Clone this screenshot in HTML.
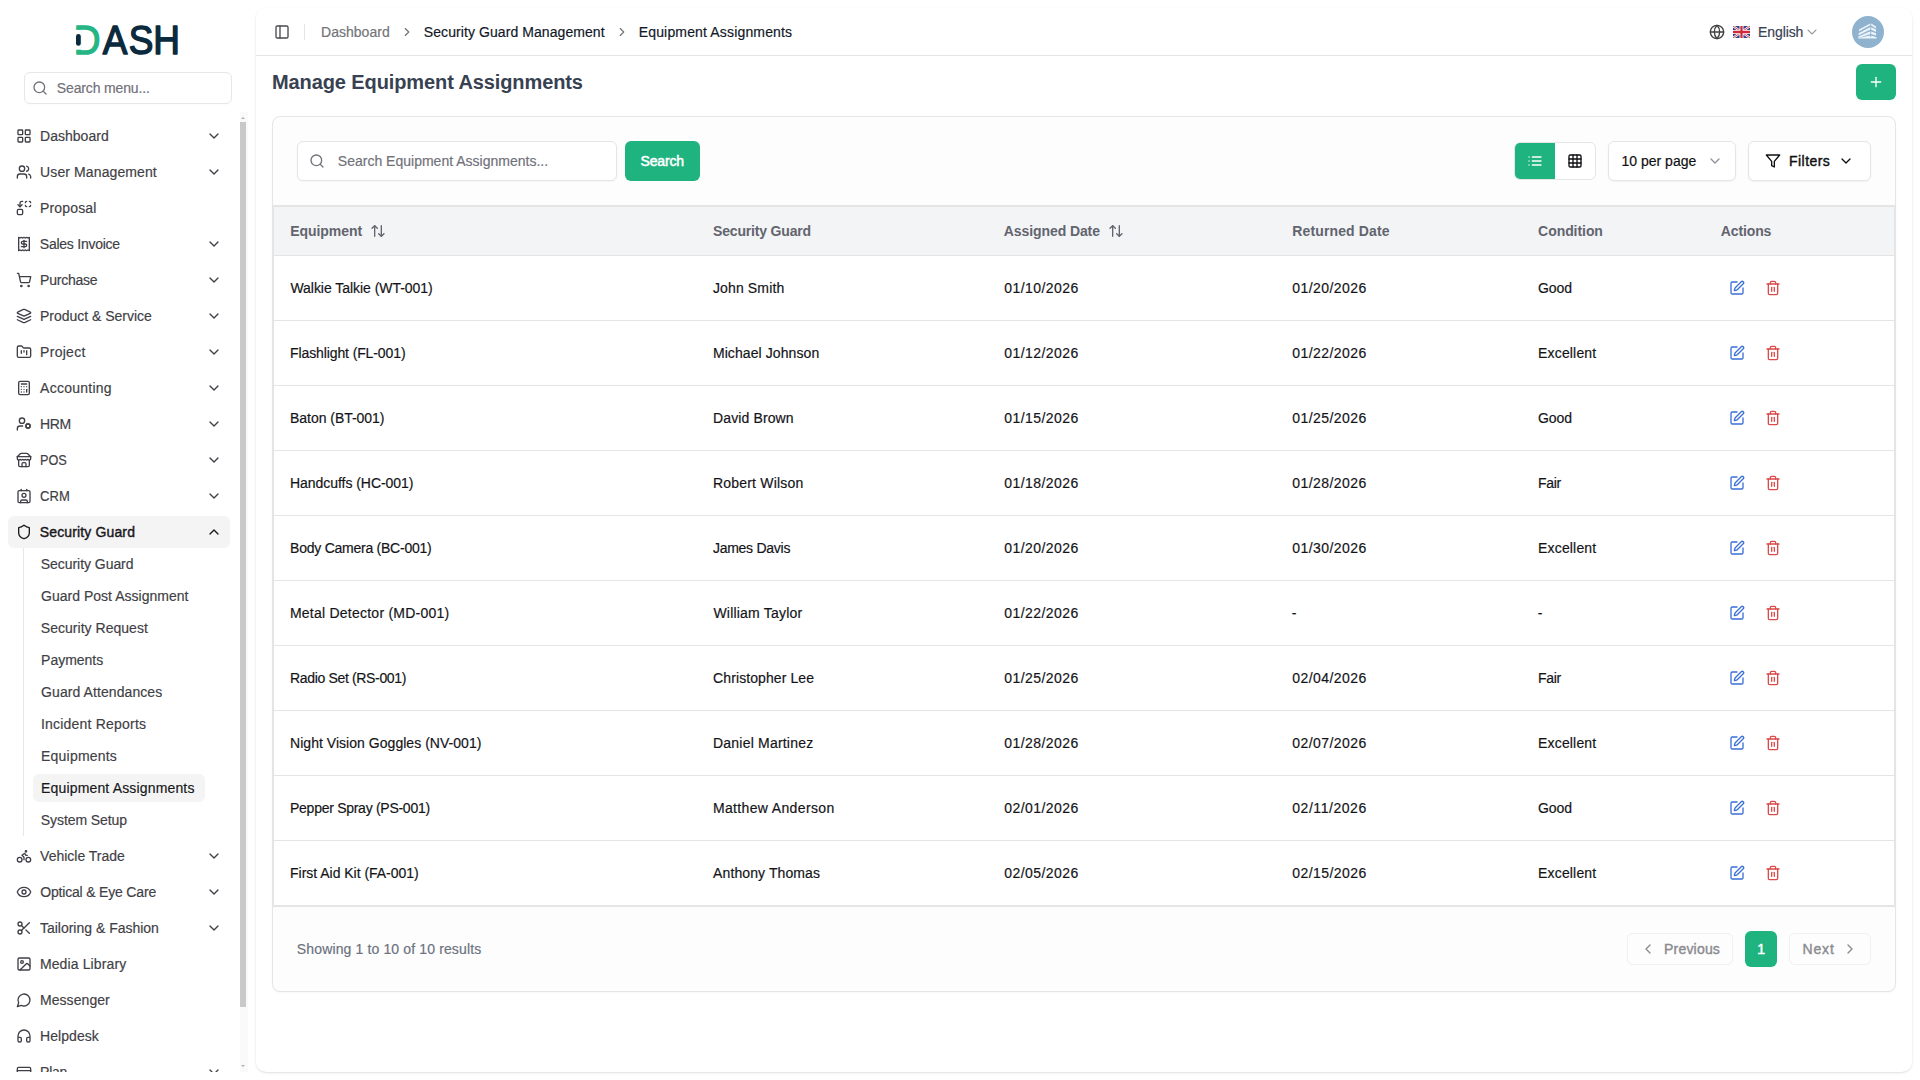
<!DOCTYPE html>
<html lang="en"><head><meta charset="utf-8"><title>Equipment Assignments</title>
<style>
*{box-sizing:border-box;margin:0;padding:0}
html,body{width:1920px;height:1080px;overflow:hidden;background:#fff}
body{font-family:"Liberation Sans",sans-serif;font-size:14px;color:#111827;position:relative}
ul{list-style:none}
.ic{display:block;flex:none}
.t{display:inline-block;white-space:nowrap;-webkit-text-stroke:.18px currentColor}
.w5{-webkit-text-stroke:.4px currentColor}
.sbtn .w5,.pn .w5{-webkit-text-stroke:.5px currentColor}
.w6{font-weight:700;-webkit-text-stroke:0}
.h{-webkit-text-stroke:0}
.sb{position:absolute;left:0;top:0;width:256px;height:1080px;background:#fff;overflow:hidden}
.logo{position:absolute;left:0;top:0;width:256px;height:72px}
.logo svg{display:block}
.sbsearch{position:absolute;left:24px;top:72px;width:208px;height:32px;border:1px solid #e7e7e9;border-radius:6px;display:flex;align-items:center;color:#71717a;background:#fff;box-shadow:0 1px 2px rgba(0,0,0,.02)}
.sbsearch .ic{margin-left:7px;color:#71717a}
.sbsearch .t{margin-left:9px;font-size:14px}
.sbscroll{position:absolute;left:8px;top:112px;width:230px;height:960px;overflow:hidden}
.menu{padding:8px 0}
.mi{height:32px;margin-bottom:4px;display:flex;align-items:center;padding:0 8px;border-radius:6px;color:#3f3f46;position:relative;width:222px}
.mi .mic{margin-right:8px;color:#3f3f46}
.mi .chev{position:absolute;right:8px;top:8px;color:#3f3f46}
.mi.act{background:#f4f4f5;color:#18181b}
.mi.act .mic,.mi.act .chev{color:#18181b}
.subw{margin:-4px 0 4px 0}
.sub{margin-left:15px;border-left:1px solid #e5e7eb;padding:2px 0 2px 9px}
.si{height:28px;margin-bottom:4px;display:flex;align-items:center;color:#3f3f46}
.si{padding:0 8px;border-radius:6px;width:172px}
.si .t{line-height:28px}
.si.cur{background:#f4f4f5;color:#18181b}
.sub .si:last-child{margin-bottom:0}
.sbar{position:absolute;left:240px;top:112px;width:8px;height:960px;background:#fafafa}
.sbar .thumb{position:absolute;left:0;top:10px;width:6px;height:885px;background:#c9c9c9}
.sbar .up,.sbar .dn{position:absolute;left:1px;width:0;height:0;border-left:2px solid transparent;border-right:2px solid transparent}
.sbar .up{top:5px;border-bottom:2px solid #adadad}
.sbar .dn{bottom:5px;border-top:2px solid #adadad}
.inset{position:absolute;left:256px;top:8px;width:1656px;height:1064px;background:#fff;border-radius:10px;box-shadow:0 1px 3px rgba(0,0,0,.1),0 1px 2px -1px rgba(0,0,0,.1)}
.hd{position:absolute;left:0;top:0;width:1656px;height:48px;border-bottom:1px solid #e5e5e5}
.tg{position:absolute;left:18px;top:16px;color:#4a4a50}
.sep{position:absolute;left:48px;top:16px;width:1px;height:16px;background:#e5e5e5}
.bc{position:absolute;left:65px;top:0;height:47px;display:flex;align-items:center;font-size:14px}
.bc .b1{color:#737378}
.bc .b2,.bc .b3{color:#111827}
.bc .bcs{color:#737378;margin:0 10px}
.hr{position:absolute;right:0;top:0;height:47px;width:300px}
.hr>*{position:absolute}
.hr .gl{left:97px;top:16px;color:#404040}
.hr .flag{left:121px;top:18px}
.hr .lang{left:146px;top:15px;line-height:18px;color:#374151;font-size:14px}
.hr .lch{left:192px;top:16px;color:#9a9da3}
.hr .av{left:240px;top:8px;width:32px;height:32px}
.ph{position:absolute;left:16px;top:56px;width:1624px;height:36px}
.ph h1{position:absolute;left:0;top:5px;font-size:20px;line-height:26px;font-weight:700;color:#374151}
.add{position:absolute;right:0;top:0;width:40px;height:36px;border-radius:6px;background:#1fb37f;color:#fff;display:flex;align-items:center;justify-content:center}
.cardx{position:absolute;left:16px;top:108px;width:1624px;height:876px;border:1px solid #e5e5e5;border-radius:8px;background:#fdfdfd;box-shadow:0 1px 2px rgba(0,0,0,.03)}
.tb{position:relative;height:89px;border-bottom:1px solid #e5e5e5}
.sin{position:absolute;left:24px;top:24px;width:320px;height:40px;border:1px solid #e5e5e5;border-radius:6px;background:#fff;display:flex;align-items:center;color:#71717a;box-shadow:0 1px 2px rgba(0,0,0,.04)}
.sin .ic{margin-left:11px}
.sin .t{margin-left:13px}
.sbtn{position:absolute;left:352px;top:24px;width:75px;height:40px;border-radius:6px;background:#1fb37f;color:#fff;display:flex;align-items:center;justify-content:center;font-size:14px;-webkit-text-stroke:.45px #fff}
.tbr{position:absolute;right:24px;top:24px;height:40px;display:flex;align-items:center}
.vt{display:flex;height:38px;width:82px;background:#fff;border-radius:6px;position:relative;border:1px solid #e5e5e5}
.v1{width:40px;height:36px;background:#1fb37f;color:#fff;display:flex;align-items:center;justify-content:center;border-radius:5px 0 0 5px}
.v2{width:40px;height:36px;display:flex;align-items:center;justify-content:center;color:#0f0f12}
.pp{margin-left:12px;width:128px;height:40px;border:1px solid #e5e5e5;border-radius:6px;background:#fff;display:flex;align-items:center;justify-content:space-between;padding:0 12px;color:#0f0f12;box-shadow:0 1px 2px rgba(0,0,0,.05)}
.pp .ppc{color:#8f9299}
.fl{margin-left:12px;width:123px;height:40px;border:1px solid #e5e5e5;border-radius:6px;background:#fff;display:flex;align-items:center;padding:0 16px;color:#0f0f12;box-shadow:0 1px 2px rgba(0,0,0,.05)}
.fl .fli{margin-right:8px}
.fl .flc{margin-left:8px}
.tbl{border-collapse:separate;border-spacing:0;table-layout:fixed;width:1622px;background:#fff;border:1px solid #e5e5e5}
.tbl th{height:49px;background:#f3f4f6;text-align:left;padding:0 16px;font-weight:400;color:#62646e;border-bottom:1px solid #e5e5e5;white-space:nowrap}
.tbl th .t{vertical-align:baseline}
.tbl th .srt{display:inline-block;vertical-align:-3px;margin-left:8px;color:#62646e}
.tbl td{height:65px;padding:0 16px;border-bottom:1px solid #e5e5e5;color:#141418;white-space:nowrap}
.tbl tr:last-child td{border-bottom:0;height:64px}
.acts{display:flex;align-items:center}
.acts .ed{color:#3b6fd8;margin-left:8px}
.acts .tr{color:#dc4a4a;margin-left:20px}
.ft{position:relative;height:85px;border-top:1px solid #e5e5e5}
.info{position:absolute;left:24px;top:33px;color:#6b7280;line-height:18px}
.pg{position:absolute;right:24px;top:24px;height:36px;display:flex;align-items:center}
.pb{height:32px;border:1px solid #f0f0f1;border-radius:6px;display:flex;align-items:center;justify-content:flex-end;color:#8b8b90;padding:0 12px;background:#fdfdfd}
.pb.next{width:82px}
.pb.prev{width:106px;justify-content:flex-start}
.pb.prev .ic{margin-right:8px}
.pb.next .ic{margin-left:8px}
.pn{width:32px;height:36px;border-radius:6px;background:#1fb37f;color:#fff;display:flex;align-items:center;justify-content:center;margin:0 12px;-webkit-text-stroke:.45px #fff}

</style></head>
<body>
<aside class="sb">
  <div class="logo"><svg class="lg" width="256" height="72" viewBox="0 0 256 72"><text transform="scale(0.9 1)" x="82.05 114.2 143.2 170.2" y="54" font-family="Liberation Sans, sans-serif" font-weight="400" font-size="41" stroke-width="1.5" stroke-linejoin="round"><tspan fill="#25b685" stroke="#25b685">D</tspan><tspan fill="#0b2a3d" stroke="#0b2a3d">ASH</tspan></text><rect x="74" y="29.9" width="7.6" height="19.8" fill="#fff"/><rect x="76" y="34" width="4.8" height="11.8" rx="2.4" fill="#0b2a3d"/></svg></div>
  <div class="sbsearch"><svg class="ic ssi" width="16" height="16" viewBox="0 0 24 24" fill="none" stroke="currentColor" stroke-width="2" stroke-linecap="round" stroke-linejoin="round"><circle cx="11" cy="11" r="8"/><path d="m21 21-4.3-4.3"/></svg><span class="t" style="width:92.49px;letter-spacing:-0.146px;text-indent:-0.19px;">Search menu...</span></div>
  <div class="sbscroll"><ul class="menu"><li class="mi"><svg class="ic mic" width="16" height="16" viewBox="0 0 24 24" fill="none" stroke="currentColor" stroke-width="2" stroke-linecap="round" stroke-linejoin="round"><rect width="7" height="7" x="3" y="3" rx="1"/><rect width="7" height="7" x="14" y="3" rx="1"/><rect width="7" height="7" x="14" y="14" rx="1"/><rect width="7" height="7" x="3" y="14" rx="1"/></svg><span class="t" style="width:69.03px;letter-spacing:0.021px;text-indent:0.06px;">Dashboard</span><svg class="ic chev" width="16" height="16" viewBox="0 0 24 24" fill="none" stroke="currentColor" stroke-width="2" stroke-linecap="round" stroke-linejoin="round"><path d="m6 9 6 6 6-6"/></svg></li><li class="mi"><svg class="ic mic" width="16" height="16" viewBox="0 0 24 24" fill="none" stroke="currentColor" stroke-width="2" stroke-linecap="round" stroke-linejoin="round"><path d="M16 21v-2a4 4 0 0 0-4-4H6a4 4 0 0 0-4 4v2"/><circle cx="9" cy="7" r="4"/><path d="M22 21v-2a4 4 0 0 0-3-3.87"/><path d="M16 3.13a4 4 0 0 1 0 7.75"/></svg><span class="t" style="width:116.9px;letter-spacing:0.106px;text-indent:0.12px;">User Management</span><svg class="ic chev" width="16" height="16" viewBox="0 0 24 24" fill="none" stroke="currentColor" stroke-width="2" stroke-linecap="round" stroke-linejoin="round"><path d="m6 9 6 6 6-6"/></svg></li><li class="mi"><svg class="ic mic" width="16" height="16" viewBox="0 0 24 24" fill="none" stroke="currentColor" stroke-width="2" stroke-linecap="round" stroke-linejoin="round"><path d="M14 4a2 2 0 0 1 2-2"/><path d="M16 10a2 2 0 0 1-2-2"/><path d="M20 2a2 2 0 0 1 2 2"/><path d="M22 8a2 2 0 0 1-2 2"/><path d="m3 7 3 3 3-3"/><path d="M6 10V5a3 3 0 0 1 3-3h1"/><rect x="2" y="14" width="8" height="8" rx="2"/></svg><span class="t" style="width:55.84px;letter-spacing:0.153px;text-indent:0.06px;">Proposal</span></li><li class="mi"><svg class="ic mic" width="16" height="16" viewBox="0 0 24 24" fill="none" stroke="currentColor" stroke-width="2" stroke-linecap="round" stroke-linejoin="round"><path d="M4 2v20l2-1 2 1 2-1 2 1 2-1 2 1 2-1 2 1V2l-2 1-2-1-2 1-2-1-2 1-2-1-2 1Z"/><path d="M16 8h-6a2 2 0 1 0 0 4h4a2 2 0 1 1 0 4H8"/><path d="M12 17.5v-11"/></svg><span class="t" style="width:80.32px;letter-spacing:-0.247px;text-indent:-0.19px;">Sales Invoice</span><svg class="ic chev" width="16" height="16" viewBox="0 0 24 24" fill="none" stroke="currentColor" stroke-width="2" stroke-linecap="round" stroke-linejoin="round"><path d="m6 9 6 6 6-6"/></svg></li><li class="mi"><svg class="ic mic" width="16" height="16" viewBox="0 0 24 24" fill="none" stroke="currentColor" stroke-width="2" stroke-linecap="round" stroke-linejoin="round"><circle cx="8" cy="21" r="1"/><circle cx="19" cy="21" r="1"/><path d="M2.05 2.05h2l2.66 12.42a2 2 0 0 0 2 1.58h9.78a2 2 0 0 0 1.95-1.57l1.65-7.43H5.12"/></svg><span class="t" style="width:57.85px;letter-spacing:-0.225px;text-indent:0.06px;">Purchase</span><svg class="ic chev" width="16" height="16" viewBox="0 0 24 24" fill="none" stroke="currentColor" stroke-width="2" stroke-linecap="round" stroke-linejoin="round"><path d="m6 9 6 6 6-6"/></svg></li><li class="mi"><svg class="ic mic" width="16" height="16" viewBox="0 0 24 24" fill="none" stroke="currentColor" stroke-width="2" stroke-linecap="round" stroke-linejoin="round"><path d="m12.83 2.18a2 2 0 0 0-1.66 0L2.6 6.08a1 1 0 0 0 0 1.83l8.58 3.91a2 2 0 0 0 1.66 0l8.58-3.9a1 1 0 0 0 0-1.83Z"/><path d="m22 17.65-9.17 4.16a2 2 0 0 1-1.66 0L2 17.65"/><path d="m22 12.65-9.17 4.16a2 2 0 0 1-1.66 0L2 12.65"/></svg><span class="t" style="width:112.05px;letter-spacing:-0.017px;text-indent:0.06px;">Product &amp; Service</span><svg class="ic chev" width="16" height="16" viewBox="0 0 24 24" fill="none" stroke="currentColor" stroke-width="2" stroke-linecap="round" stroke-linejoin="round"><path d="m6 9 6 6 6-6"/></svg></li><li class="mi"><svg class="ic mic" width="16" height="16" viewBox="0 0 24 24" fill="none" stroke="currentColor" stroke-width="2" stroke-linecap="round" stroke-linejoin="round"><path d="M4 20h16a2 2 0 0 0 2-2V8a2 2 0 0 0-2-2h-7.93a2 2 0 0 1-1.66-.9l-.82-1.2A2 2 0 0 0 7.93 3H4a2 2 0 0 0-2 2v13c0 1.1.9 2 2 2Z"/><path d="M8 10v4"/><path d="M12 10v2"/><path d="M16 10v6"/></svg><span class="t" style="width:45.54px;letter-spacing:0.295px;text-indent:0.06px;">Project</span><svg class="ic chev" width="16" height="16" viewBox="0 0 24 24" fill="none" stroke="currentColor" stroke-width="2" stroke-linecap="round" stroke-linejoin="round"><path d="m6 9 6 6 6-6"/></svg></li><li class="mi"><svg class="ic mic" width="16" height="16" viewBox="0 0 24 24" fill="none" stroke="currentColor" stroke-width="2" stroke-linecap="round" stroke-linejoin="round"><rect width="16" height="20" x="4" y="2" rx="2"/><line x1="8" x2="16" y1="6" y2="6"/><line x1="16" x2="16" y1="14" y2="18"/><path d="M16 10h.01"/><path d="M12 10h.01"/><path d="M8 10h.01"/><path d="M12 14h.01"/><path d="M8 14h.01"/><path d="M12 18h.01"/><path d="M8 18h.01"/></svg><span class="t" style="width:72.0px;letter-spacing:0.252px;text-indent:0.12px;">Accounting</span><svg class="ic chev" width="16" height="16" viewBox="0 0 24 24" fill="none" stroke="currentColor" stroke-width="2" stroke-linecap="round" stroke-linejoin="round"><path d="m6 9 6 6 6-6"/></svg></li><li class="mi"><svg class="ic mic" width="16" height="16" viewBox="0 0 24 24" fill="none" stroke="currentColor" stroke-width="2" stroke-linecap="round" stroke-linejoin="round"><circle cx="18" cy="15" r="3"/><circle cx="9" cy="7" r="4"/><path d="M10 15H6a4 4 0 0 0-4 4v2"/><path d="m21.7 16.4-.9-.3"/><path d="m15.2 13.9-.9-.3"/><path d="m16.6 18.7.3-.9"/><path d="m19.1 12.2.3-.9"/><path d="m19.6 18.7-.4-1"/><path d="m16.8 12.3-.4-1"/><path d="m14.3 16.6 1-.4"/><path d="m20.7 13.8 1-.4"/></svg><span class="t" style="width:31.03px;letter-spacing:-0.411px;text-indent:0.06px;">HRM</span><svg class="ic chev" width="16" height="16" viewBox="0 0 24 24" fill="none" stroke="currentColor" stroke-width="2" stroke-linecap="round" stroke-linejoin="round"><path d="m6 9 6 6 6-6"/></svg></li><li class="mi"><svg class="ic mic" width="16" height="16" viewBox="0 0 24 24" fill="none" stroke="currentColor" stroke-width="2" stroke-linecap="round" stroke-linejoin="round"><path d="m2 7 4.41-4.41A2 2 0 0 1 7.83 2h8.34a2 2 0 0 1 1.42.59L22 7"/><path d="M4 12v8a2 2 0 0 0 2 2h12a2 2 0 0 0 2-2v-8"/><path d="M15 22v-4a2 2 0 0 0-2-2h-2a2 2 0 0 0-2 2v4"/><path d="M2 7h20"/><path d="M22 7v3a2 2 0 0 1-2 2a2.7 2.7 0 0 1-1.59-.63.7.7 0 0 0-.82 0A2.7 2.7 0 0 1 16 12a2.7 2.7 0 0 1-1.59-.63.7.7 0 0 0-.82 0A2.7 2.7 0 0 1 12 12a2.7 2.7 0 0 1-1.59-.63.7.7 0 0 0-.82 0A2.7 2.7 0 0 1 8 12a2.7 2.7 0 0 1-1.59-.63.7.7 0 0 0-.82 0A2.7 2.7 0 0 1 4 12a2 2 0 0 1-2-2V7"/></svg><span class="t" style="width:26.89px;transform:scaleX(0.906);transform-origin:0 50%;text-indent:0.06px;">POS</span><svg class="ic chev" width="16" height="16" viewBox="0 0 24 24" fill="none" stroke="currentColor" stroke-width="2" stroke-linecap="round" stroke-linejoin="round"><path d="m6 9 6 6 6-6"/></svg></li><li class="mi"><svg class="ic mic" width="16" height="16" viewBox="0 0 24 24" fill="none" stroke="currentColor" stroke-width="2" stroke-linecap="round" stroke-linejoin="round"><path d="M16 2v2"/><path d="M7 22v-2a2 2 0 0 1 2-2h6a2 2 0 0 1 2 2v2"/><path d="M8 2v2"/><circle cx="12" cy="11" r="3"/><rect x="3" y="4" width="18" height="18" rx="2"/></svg><span class="t" style="width:29.84px;transform:scaleX(0.931);transform-origin:0 50%;text-indent:0.12px;">CRM</span><svg class="ic chev" width="16" height="16" viewBox="0 0 24 24" fill="none" stroke="currentColor" stroke-width="2" stroke-linecap="round" stroke-linejoin="round"><path d="m6 9 6 6 6-6"/></svg></li><li class="mi act"><svg class="ic mic" width="16" height="16" viewBox="0 0 24 24" fill="none" stroke="currentColor" stroke-width="2" stroke-linecap="round" stroke-linejoin="round"><path d="M20 13c0 5-3.5 7.5-7.66 8.95a1 1 0 0 1-.67-.01C7.5 20.5 4 18 4 13V6a1 1 0 0 1 1-1c2 0 4.5-1.2 6.24-2.72a1.17 1.17 0 0 1 1.52 0C14.51 3.81 17 5 19 5a1 1 0 0 1 1 1z"/></svg><span class="t w5" style="width:95.19px;letter-spacing:0.135px;text-indent:-0.19px;">Security Guard</span><svg class="ic chev" width="16" height="16" viewBox="0 0 24 24" fill="none" stroke="currentColor" stroke-width="2" stroke-linecap="round" stroke-linejoin="round"><path d="m18 15-6-6-6 6"/></svg></li><li class="subw"><ul class="sub"><li class="si"><span class="t" style="width:92.8px;letter-spacing:-0.052px;text-indent:-0.19px;">Security Guard</span></li><li class="si"><span class="t" style="width:148.3px;letter-spacing:0.01px;text-indent:0.12px;">Guard Post Assignment</span></li><li class="si"><span class="t" style="width:106.93px;letter-spacing:0.026px;text-indent:-0.19px;">Security Request</span></li><li class="si"><span class="t" style="width:62.3px;letter-spacing:-0.007px;text-indent:0.06px;">Payments</span></li><li class="si"><span class="t" style="width:122.06px;letter-spacing:0.079px;text-indent:0.12px;">Guard Attendances</span></li><li class="si"><span class="t" style="width:105.04px;letter-spacing:0.208px;text-indent:-0.06px;">Incident Reports</span></li><li class="si"><span class="t" style="width:75.9px;letter-spacing:0.208px;text-indent:0.06px;">Equipments</span></li><li class="si cur"><span class="t" style="width:154.22px;letter-spacing:0.158px;text-indent:0.06px;">Equipment Assignments</span></li><li class="si"><span class="t" style="width:86.24px;letter-spacing:-0.081px;text-indent:-0.19px;">System Setup</span></li></ul></li><li class="mi"><svg class="ic mic" width="16" height="16" viewBox="0 0 24 24" fill="none" stroke="currentColor" stroke-width="2" stroke-linecap="round" stroke-linejoin="round"><circle cx="18.5" cy="17.5" r="3.5"/><circle cx="5.5" cy="17.5" r="3.5"/><circle cx="15" cy="5" r="1"/><path d="M12 17.5V14l-3-3 4-3 2 3h2"/></svg><span class="t" style="width:85.35px;letter-spacing:-0.006px;text-indent:0.12px;">Vehicle Trade</span><svg class="ic chev" width="16" height="16" viewBox="0 0 24 24" fill="none" stroke="currentColor" stroke-width="2" stroke-linecap="round" stroke-linejoin="round"><path d="m6 9 6 6 6-6"/></svg></li><li class="mi"><svg class="ic mic" width="16" height="16" viewBox="0 0 24 24" fill="none" stroke="currentColor" stroke-width="2" stroke-linecap="round" stroke-linejoin="round"><path d="M2.062 12.348a1 1 0 0 1 0-.696 10.75 10.75 0 0 1 19.876 0 1 1 0 0 1 0 .696 10.75 10.75 0 0 1-19.876 0"/><circle cx="12" cy="12" r="3"/></svg><span class="t" style="width:116.39px;letter-spacing:-0.18px;text-indent:0.19px;">Optical &amp; Eye Care</span><svg class="ic chev" width="16" height="16" viewBox="0 0 24 24" fill="none" stroke="currentColor" stroke-width="2" stroke-linecap="round" stroke-linejoin="round"><path d="m6 9 6 6 6-6"/></svg></li><li class="mi"><svg class="ic mic" width="16" height="16" viewBox="0 0 24 24" fill="none" stroke="currentColor" stroke-width="2" stroke-linecap="round" stroke-linejoin="round"><circle cx="6" cy="6" r="3"/><path d="M8.12 8.12 12 12"/><path d="M20 4 8.12 15.88"/><circle cx="6" cy="18" r="3"/><path d="M14.8 14.8 20 20"/></svg><span class="t" style="width:119.11px;letter-spacing:-0.006px;text-indent:-0.06px;">Tailoring &amp; Fashion</span><svg class="ic chev" width="16" height="16" viewBox="0 0 24 24" fill="none" stroke="currentColor" stroke-width="2" stroke-linecap="round" stroke-linejoin="round"><path d="m6 9 6 6 6-6"/></svg></li><li class="mi"><svg class="ic mic" width="16" height="16" viewBox="0 0 24 24" fill="none" stroke="currentColor" stroke-width="2" stroke-linecap="round" stroke-linejoin="round"><rect width="18" height="18" x="3" y="3" rx="2" ry="2"/><circle cx="9" cy="9" r="2"/><path d="m21 15-3.086-3.086a2 2 0 0 0-2.828 0L6 21"/></svg><span class="t" style="width:86.48px;letter-spacing:0.128px;text-indent:-0.12px;">Media Library</span></li><li class="mi"><svg class="ic mic" width="16" height="16" viewBox="0 0 24 24" fill="none" stroke="currentColor" stroke-width="2" stroke-linecap="round" stroke-linejoin="round"><path d="M7.9 20A9 9 0 1 0 4 16.1L2 22Z"/></svg><span class="t" style="width:69.68px;letter-spacing:0.08px;text-indent:-0.12px;">Messenger</span></li><li class="mi"><svg class="ic mic" width="16" height="16" viewBox="0 0 24 24" fill="none" stroke="currentColor" stroke-width="2" stroke-linecap="round" stroke-linejoin="round"><path d="M3 14h3a2 2 0 0 1 2 2v3a2 2 0 0 1-2 2H5a2 2 0 0 1-2-2v-7a9 9 0 0 1 18 0v7a2 2 0 0 1-2 2h-1a2 2 0 0 1-2-2v-3a2 2 0 0 1 2-2h3"/></svg><span class="t" style="width:59.11px;letter-spacing:0.058px;text-indent:0.06px;">Helpdesk</span></li><li class="mi"><svg class="ic mic" width="16" height="16" viewBox="0 0 24 24" fill="none" stroke="currentColor" stroke-width="2" stroke-linecap="round" stroke-linejoin="round"><rect width="20" height="14" x="2" y="5" rx="2"/><line x1="2" x2="22" y1="10" y2="10"/></svg><span class="t" style="width:27.59px;letter-spacing:-0.244px;text-indent:0.06px;">Plan</span><svg class="ic chev" width="16" height="16" viewBox="0 0 24 24" fill="none" stroke="currentColor" stroke-width="2" stroke-linecap="round" stroke-linejoin="round"><path d="m6 9 6 6 6-6"/></svg></li></ul></div>
  <div class="sbar"><i class="up"></i><i class="thumb"></i><i class="dn"></i></div>
</aside>
<main class="inset">
  <header class="hd">
    <span class="tg"><svg class="ic " width="16" height="16" viewBox="0 0 24 24" fill="none" stroke="currentColor" stroke-width="2" stroke-linecap="round" stroke-linejoin="round"><rect width="18" height="18" x="3" y="3" rx="2"/><path d="M9 3v18"/></svg></span><span class="sep"></span>
    <nav class="bc"><span class="t b1" style="width:69.03px;letter-spacing:0.021px;text-indent:0.06px;">Dashboard</span><svg class="ic bcs" width="14" height="14" viewBox="0 0 24 24" fill="none" stroke="currentColor" stroke-width="2" stroke-linecap="round" stroke-linejoin="round"><path d="m9 18 6-6-6-6"/></svg><span class="t b2" style="width:180.68px;letter-spacing:0.074px;text-indent:-0.19px;">Security Guard Management</span><svg class="ic bcs" width="14" height="14" viewBox="0 0 24 24" fill="none" stroke="currentColor" stroke-width="2" stroke-linecap="round" stroke-linejoin="round"><path d="m9 18 6-6-6-6"/></svg><span class="t b3" style="width:154.22px;letter-spacing:0.158px;text-indent:0.06px;">Equipment Assignments</span></nav>
    <div class="hr"><svg class="ic gl" width="16" height="16" viewBox="0 0 24 24" fill="none" stroke="currentColor" stroke-width="2" stroke-linecap="round" stroke-linejoin="round"><circle cx="12" cy="12" r="10"/><path d="M12 2a14.5 14.5 0 0 0 0 20 14.5 14.5 0 0 0 0-20"/><path d="M2 12h20"/></svg><svg class="flag" width="17" height="12" viewBox="0 0 60 42"><rect width="60" height="42" fill="#2a3a8c"/><path d="M0 0 60 42M60 0 0 42" stroke="#fff" stroke-width="8"/><path d="M0 0 60 42M60 0 0 42" stroke="#d02a3a" stroke-width="3"/><path d="M30 0V42M0 21H60" stroke="#fff" stroke-width="14"/><path d="M30 0V42M0 21H60" stroke="#d02a3a" stroke-width="8"/></svg><span class="t lang" style="width:45.58px;letter-spacing:-0.106px;text-indent:0.06px;">English</span><svg class="ic lch" width="16" height="16" viewBox="0 0 24 24" fill="none" stroke="currentColor" stroke-width="1.6" stroke-linecap="round" stroke-linejoin="round"><path d="m6 9 6 6 6-6"/></svg><span class="av"><svg width="32" height="32" viewBox="0 0 32 32"><circle cx="16" cy="16" r="16" fill="#8fb2cf"/><g fill="#eef5fa"><path d="M7 13.6 18.3 7.4 18.3 9.3 7 15.3Z"/><path d="M6.6 17.2 18.3 11 18.3 13.6 6.6 19.2Z"/><path d="M6.4 20.6 18.3 15.2 18.3 18 6.4 22Z"/><path d="M19.2 7.6 24 10.4 24 12.4 19.2 9.6Z"/><path d="M19.2 11.2 24 13.6 24 16 19.2 13.8Z"/><path d="M19.2 15.4 24 17.2 24 19.6 19.2 18Z"/><path d="M6.2 22.6H24.6V21.2L19.2 19.6V21.2H18.3V19.4L6.2 22Z"/></g></svg></span></div>
  </header>
  <div class="ph"><h1><span class="t h" style="width:310.41px;letter-spacing:-0.103px;">Manage Equipment Assignments</span></h1><span class="add"><svg class="ic " width="16" height="16" viewBox="0 0 24 24" fill="none" stroke="currentColor" stroke-width="2" stroke-linecap="round" stroke-linejoin="round"><path d="M5 12h14"/><path d="M12 5v14"/></svg></span></div>
  <section class="cardx">
    <div class="tb">
      <div class="sin"><svg class="ic sii" width="16" height="16" viewBox="0 0 24 24" fill="none" stroke="currentColor" stroke-width="2" stroke-linecap="round" stroke-linejoin="round"><circle cx="11" cy="11" r="8"/><path d="m21 21-4.3-4.3"/></svg><span class="t" style="width:210.48px;letter-spacing:0.005px;text-indent:-0.19px;">Search Equipment Assignments...</span></div>
      <span class="sbtn"><span class="t w5" style="width:43.55px;letter-spacing:-0.16px;text-indent:-0.19px;">Search</span></span>
      <div class="tbr">
        <span class="vt"><span class="v1"><svg class="ic " width="16" height="16" viewBox="0 0 24 24" fill="none" stroke="currentColor" stroke-width="2" stroke-linecap="round" stroke-linejoin="round"><path d="M3 12h.01"/><path d="M3 18h.01"/><path d="M3 6h.01"/><path d="M8 12h13"/><path d="M8 18h13"/><path d="M8 6h13"/></svg></span><span class="v2"><svg class="ic " width="16" height="16" viewBox="0 0 24 24" fill="none" stroke="currentColor" stroke-width="2" stroke-linecap="round" stroke-linejoin="round"><rect width="18" height="18" x="3" y="3" rx="2"/><path d="M3 9h18"/><path d="M3 15h18"/><path d="M9 3v18"/><path d="M15 3v18"/></svg></span></span>
        <span class="pp"><span class="t" style="width:75.49px;letter-spacing:0.016px;text-indent:0.38px;">10 per page</span><svg class="ic ppc" width="16" height="16" viewBox="0 0 24 24" fill="none" stroke="currentColor" stroke-width="2" stroke-linecap="round" stroke-linejoin="round"><path d="m6 9 6 6 6-6"/></svg></span>
        <span class="fl"><svg class="ic fli" width="16" height="16" viewBox="0 0 24 24" fill="none" stroke="currentColor" stroke-width="2" stroke-linecap="round" stroke-linejoin="round"><polygon points="22 3 2 3 10 12.46 10 19 14 21 14 12.46 22 3"/></svg><span class="t w5" style="width:40.92px;letter-spacing:0.444px;text-indent:0.06px;">Filters</span><svg class="ic flc" width="16" height="16" viewBox="0 0 24 24" fill="none" stroke="currentColor" stroke-width="2" stroke-linecap="round" stroke-linejoin="round"><path d="m6 9 6 6 6-6"/></svg></span>
      </div>
    </div>
    <table class="tbl">
      <colgroup><col style="width:423px"><col style="width:291px"><col style="width:288px"><col style="width:246px"><col style="width:183px"><col style="width:189px"></colgroup>
      <thead><tr><th><span class="t w6" style="width:72.27px;letter-spacing:-0.064px;text-indent:0.25px;">Equipment</span><svg class="ic srt" width="16" height="16" viewBox="0 0 24 24" fill="none" stroke="currentColor" stroke-width="2" stroke-linecap="round" stroke-linejoin="round"><path d="m21 16-4 4-4-4"/><path d="M17 20V4"/><path d="m3 8 4-4 4 4"/><path d="M7 4v16"/></svg></th><th><span class="t w6" style="width:98.3px;letter-spacing:-0.181px;text-indent:0.12px;">Security Guard</span></th><th><span class="t w6" style="width:96.13px;letter-spacing:-0.091px;text-indent:-0.19px;">Assigned Date</span><svg class="ic srt" width="16" height="16" viewBox="0 0 24 24" fill="none" stroke="currentColor" stroke-width="2" stroke-linecap="round" stroke-linejoin="round"><path d="m21 16-4 4-4-4"/><path d="M17 20V4"/><path d="m3 8 4-4 4 4"/><path d="M7 4v16"/></svg></th><th><span class="t w6" style="width:97.76px;letter-spacing:0.138px;text-indent:0.25px;">Returned Date</span></th><th><span class="t w6" style="width:65.03px;letter-spacing:-0.063px;text-indent:0.12px;">Condition</span></th><th><span class="t w6" style="width:50.35px;letter-spacing:-0.137px;text-indent:-0.19px;">Actions</span></th></tr></thead>
      <tbody><tr><td><span class="t" style="width:143.18px;letter-spacing:-0.044px;text-indent:0.44px;">Walkie Talkie (WT-001)</span></td><td><span class="t" style="width:71.44px;letter-spacing:0.145px;text-indent:-0.12px;">John Smith</span></td><td><span class="t" style="width:74.35px;letter-spacing:0.427px;text-indent:0.25px;">01/10/2026</span></td><td><span class="t" style="width:74.35px;letter-spacing:0.427px;text-indent:0.25px;">01/20/2026</span></td><td><span class="t" style="width:34.26px;letter-spacing:-0.139px;text-indent:0.12px;">Good</span></td><td><span class="acts"><svg class="ic ed" width="16" height="16" viewBox="0 0 24 24" fill="none" stroke="currentColor" stroke-width="2" stroke-linecap="round" stroke-linejoin="round"><path d="M12 3H5a2 2 0 0 0-2 2v14a2 2 0 0 0 2 2h14a2 2 0 0 0 2-2v-7"/><path d="M18.375 2.625a1 1 0 0 1 3 3l-9.013 9.014a2 2 0 0 1-.853.505l-2.873.84a.5.5 0 0 1-.62-.62l.84-2.873a2 2 0 0 1 .506-.852z"/></svg><svg class="ic tr" width="16" height="16" viewBox="0 0 24 24" fill="none" stroke="currentColor" stroke-width="2" stroke-linecap="round" stroke-linejoin="round"><path d="M3 6h18"/><path d="M19 6v14c0 1-1 2-2 2H7c-1 0-2-1-2-2V6"/><path d="M8 6V4c0-1 1-2 2-2h4c1 0 2 1 2 2v2"/><line x1="10" x2="10" y1="11" y2="17"/><line x1="14" x2="14" y1="11" y2="17"/></svg></span></td></tr><tr><td><span class="t" style="width:115.82px;letter-spacing:-0.111px;text-indent:0.06px;">Flashlight (FL-001)</span></td><td><span class="t" style="width:106.46px;letter-spacing:0.092px;text-indent:-0.12px;">Michael Johnson</span></td><td><span class="t" style="width:74.35px;letter-spacing:0.427px;text-indent:0.25px;">01/12/2026</span></td><td><span class="t" style="width:74.35px;letter-spacing:0.427px;text-indent:0.25px;">01/22/2026</span></td><td><span class="t" style="width:58.34px;letter-spacing:0.168px;text-indent:0.06px;">Excellent</span></td><td><span class="acts"><svg class="ic ed" width="16" height="16" viewBox="0 0 24 24" fill="none" stroke="currentColor" stroke-width="2" stroke-linecap="round" stroke-linejoin="round"><path d="M12 3H5a2 2 0 0 0-2 2v14a2 2 0 0 0 2 2h14a2 2 0 0 0 2-2v-7"/><path d="M18.375 2.625a1 1 0 0 1 3 3l-9.013 9.014a2 2 0 0 1-.853.505l-2.873.84a.5.5 0 0 1-.62-.62l.84-2.873a2 2 0 0 1 .506-.852z"/></svg><svg class="ic tr" width="16" height="16" viewBox="0 0 24 24" fill="none" stroke="currentColor" stroke-width="2" stroke-linecap="round" stroke-linejoin="round"><path d="M3 6h18"/><path d="M19 6v14c0 1-1 2-2 2H7c-1 0-2-1-2-2V6"/><path d="M8 6V4c0-1 1-2 2-2h4c1 0 2 1 2 2v2"/><line x1="10" x2="10" y1="11" y2="17"/><line x1="14" x2="14" y1="11" y2="17"/></svg></span></td></tr><tr><td><span class="t" style="width:94.71px;letter-spacing:-0.043px;text-indent:0.06px;">Baton (BT-001)</span></td><td><span class="t" style="width:80.87px;letter-spacing:0.121px;text-indent:0.06px;">David Brown</span></td><td><span class="t" style="width:74.35px;letter-spacing:0.427px;text-indent:0.25px;">01/15/2026</span></td><td><span class="t" style="width:74.35px;letter-spacing:0.427px;text-indent:0.25px;">01/25/2026</span></td><td><span class="t" style="width:34.26px;letter-spacing:-0.139px;text-indent:0.12px;">Good</span></td><td><span class="acts"><svg class="ic ed" width="16" height="16" viewBox="0 0 24 24" fill="none" stroke="currentColor" stroke-width="2" stroke-linecap="round" stroke-linejoin="round"><path d="M12 3H5a2 2 0 0 0-2 2v14a2 2 0 0 0 2 2h14a2 2 0 0 0 2-2v-7"/><path d="M18.375 2.625a1 1 0 0 1 3 3l-9.013 9.014a2 2 0 0 1-.853.505l-2.873.84a.5.5 0 0 1-.62-.62l.84-2.873a2 2 0 0 1 .506-.852z"/></svg><svg class="ic tr" width="16" height="16" viewBox="0 0 24 24" fill="none" stroke="currentColor" stroke-width="2" stroke-linecap="round" stroke-linejoin="round"><path d="M3 6h18"/><path d="M19 6v14c0 1-1 2-2 2H7c-1 0-2-1-2-2V6"/><path d="M8 6V4c0-1 1-2 2-2h4c1 0 2 1 2 2v2"/><line x1="10" x2="10" y1="11" y2="17"/><line x1="14" x2="14" y1="11" y2="17"/></svg></span></td></tr><tr><td><span class="t" style="width:123.7px;letter-spacing:-0.051px;text-indent:0.06px;">Handcuffs (HC-001)</span></td><td><span class="t" style="width:90.45px;letter-spacing:0.186px;text-indent:0.06px;">Robert Wilson</span></td><td><span class="t" style="width:74.35px;letter-spacing:0.427px;text-indent:0.25px;">01/18/2026</span></td><td><span class="t" style="width:74.35px;letter-spacing:0.427px;text-indent:0.25px;">01/28/2026</span></td><td><span class="t" style="width:23.01px;letter-spacing:-0.358px;text-indent:0.06px;">Fair</span></td><td><span class="acts"><svg class="ic ed" width="16" height="16" viewBox="0 0 24 24" fill="none" stroke="currentColor" stroke-width="2" stroke-linecap="round" stroke-linejoin="round"><path d="M12 3H5a2 2 0 0 0-2 2v14a2 2 0 0 0 2 2h14a2 2 0 0 0 2-2v-7"/><path d="M18.375 2.625a1 1 0 0 1 3 3l-9.013 9.014a2 2 0 0 1-.853.505l-2.873.84a.5.5 0 0 1-.62-.62l.84-2.873a2 2 0 0 1 .506-.852z"/></svg><svg class="ic tr" width="16" height="16" viewBox="0 0 24 24" fill="none" stroke="currentColor" stroke-width="2" stroke-linecap="round" stroke-linejoin="round"><path d="M3 6h18"/><path d="M19 6v14c0 1-1 2-2 2H7c-1 0-2-1-2-2V6"/><path d="M8 6V4c0-1 1-2 2-2h4c1 0 2 1 2 2v2"/><line x1="10" x2="10" y1="11" y2="17"/><line x1="14" x2="14" y1="11" y2="17"/></svg></span></td></tr><tr><td><span class="t" style="width:141.98px;letter-spacing:-0.244px;text-indent:0.06px;">Body Camera (BC-001)</span></td><td><span class="t" style="width:77.47px;letter-spacing:-0.256px;text-indent:-0.12px;">James Davis</span></td><td><span class="t" style="width:74.35px;letter-spacing:0.427px;text-indent:0.25px;">01/20/2026</span></td><td><span class="t" style="width:74.35px;letter-spacing:0.427px;text-indent:0.25px;">01/30/2026</span></td><td><span class="t" style="width:58.34px;letter-spacing:0.168px;text-indent:0.06px;">Excellent</span></td><td><span class="acts"><svg class="ic ed" width="16" height="16" viewBox="0 0 24 24" fill="none" stroke="currentColor" stroke-width="2" stroke-linecap="round" stroke-linejoin="round"><path d="M12 3H5a2 2 0 0 0-2 2v14a2 2 0 0 0 2 2h14a2 2 0 0 0 2-2v-7"/><path d="M18.375 2.625a1 1 0 0 1 3 3l-9.013 9.014a2 2 0 0 1-.853.505l-2.873.84a.5.5 0 0 1-.62-.62l.84-2.873a2 2 0 0 1 .506-.852z"/></svg><svg class="ic tr" width="16" height="16" viewBox="0 0 24 24" fill="none" stroke="currentColor" stroke-width="2" stroke-linecap="round" stroke-linejoin="round"><path d="M3 6h18"/><path d="M19 6v14c0 1-1 2-2 2H7c-1 0-2-1-2-2V6"/><path d="M8 6V4c0-1 1-2 2-2h4c1 0 2 1 2 2v2"/><line x1="10" x2="10" y1="11" y2="17"/><line x1="14" x2="14" y1="11" y2="17"/></svg></span></td></tr><tr><td><span class="t" style="width:159.46px;letter-spacing:0.24px;text-indent:-0.12px;">Metal Detector (MD-001)</span></td><td><span class="t" style="width:89.24px;letter-spacing:0.198px;text-indent:0.44px;">William Taylor</span></td><td><span class="t" style="width:74.35px;letter-spacing:0.427px;text-indent:0.25px;">01/22/2026</span></td><td><span class="t" style="width:4.09px;text-indent:-0.19px;">-</span></td><td><span class="t" style="width:4.09px;text-indent:-0.19px;">-</span></td><td><span class="acts"><svg class="ic ed" width="16" height="16" viewBox="0 0 24 24" fill="none" stroke="currentColor" stroke-width="2" stroke-linecap="round" stroke-linejoin="round"><path d="M12 3H5a2 2 0 0 0-2 2v14a2 2 0 0 0 2 2h14a2 2 0 0 0 2-2v-7"/><path d="M18.375 2.625a1 1 0 0 1 3 3l-9.013 9.014a2 2 0 0 1-.853.505l-2.873.84a.5.5 0 0 1-.62-.62l.84-2.873a2 2 0 0 1 .506-.852z"/></svg><svg class="ic tr" width="16" height="16" viewBox="0 0 24 24" fill="none" stroke="currentColor" stroke-width="2" stroke-linecap="round" stroke-linejoin="round"><path d="M3 6h18"/><path d="M19 6v14c0 1-1 2-2 2H7c-1 0-2-1-2-2V6"/><path d="M8 6V4c0-1 1-2 2-2h4c1 0 2 1 2 2v2"/><line x1="10" x2="10" y1="11" y2="17"/><line x1="14" x2="14" y1="11" y2="17"/></svg></span></td></tr><tr><td><span class="t" style="width:116.7px;letter-spacing:-0.341px;text-indent:0.06px;">Radio Set (RS-001)</span></td><td><span class="t" style="width:101.23px;letter-spacing:0.091px;text-indent:0.12px;">Christopher Lee</span></td><td><span class="t" style="width:74.35px;letter-spacing:0.427px;text-indent:0.25px;">01/25/2026</span></td><td><span class="t" style="width:74.35px;letter-spacing:0.427px;text-indent:0.25px;">02/04/2026</span></td><td><span class="t" style="width:23.01px;letter-spacing:-0.358px;text-indent:0.06px;">Fair</span></td><td><span class="acts"><svg class="ic ed" width="16" height="16" viewBox="0 0 24 24" fill="none" stroke="currentColor" stroke-width="2" stroke-linecap="round" stroke-linejoin="round"><path d="M12 3H5a2 2 0 0 0-2 2v14a2 2 0 0 0 2 2h14a2 2 0 0 0 2-2v-7"/><path d="M18.375 2.625a1 1 0 0 1 3 3l-9.013 9.014a2 2 0 0 1-.853.505l-2.873.84a.5.5 0 0 1-.62-.62l.84-2.873a2 2 0 0 1 .506-.852z"/></svg><svg class="ic tr" width="16" height="16" viewBox="0 0 24 24" fill="none" stroke="currentColor" stroke-width="2" stroke-linecap="round" stroke-linejoin="round"><path d="M3 6h18"/><path d="M19 6v14c0 1-1 2-2 2H7c-1 0-2-1-2-2V6"/><path d="M8 6V4c0-1 1-2 2-2h4c1 0 2 1 2 2v2"/><line x1="10" x2="10" y1="11" y2="17"/><line x1="14" x2="14" y1="11" y2="17"/></svg></span></td></tr><tr><td><span class="t" style="width:191.68px;letter-spacing:0.034px;text-indent:0.06px;">Night Vision Goggles (NV-001)</span></td><td><span class="t" style="width:100.0px;letter-spacing:0.203px;text-indent:0.06px;">Daniel Martinez</span></td><td><span class="t" style="width:74.35px;letter-spacing:0.427px;text-indent:0.25px;">01/28/2026</span></td><td><span class="t" style="width:74.35px;letter-spacing:0.427px;text-indent:0.25px;">02/07/2026</span></td><td><span class="t" style="width:58.34px;letter-spacing:0.168px;text-indent:0.06px;">Excellent</span></td><td><span class="acts"><svg class="ic ed" width="16" height="16" viewBox="0 0 24 24" fill="none" stroke="currentColor" stroke-width="2" stroke-linecap="round" stroke-linejoin="round"><path d="M12 3H5a2 2 0 0 0-2 2v14a2 2 0 0 0 2 2h14a2 2 0 0 0 2-2v-7"/><path d="M18.375 2.625a1 1 0 0 1 3 3l-9.013 9.014a2 2 0 0 1-.853.505l-2.873.84a.5.5 0 0 1-.62-.62l.84-2.873a2 2 0 0 1 .506-.852z"/></svg><svg class="ic tr" width="16" height="16" viewBox="0 0 24 24" fill="none" stroke="currentColor" stroke-width="2" stroke-linecap="round" stroke-linejoin="round"><path d="M3 6h18"/><path d="M19 6v14c0 1-1 2-2 2H7c-1 0-2-1-2-2V6"/><path d="M8 6V4c0-1 1-2 2-2h4c1 0 2 1 2 2v2"/><line x1="10" x2="10" y1="11" y2="17"/><line x1="14" x2="14" y1="11" y2="17"/></svg></span></td></tr><tr><td><span class="t" style="width:140.36px;letter-spacing:-0.275px;text-indent:0.06px;">Pepper Spray (PS-001)</span></td><td><span class="t" style="width:122.18px;letter-spacing:0.356px;text-indent:-0.12px;">Matthew Anderson</span></td><td><span class="t" style="width:74.35px;letter-spacing:0.427px;text-indent:0.25px;">02/01/2026</span></td><td><span class="t" style="width:74.35px;letter-spacing:0.543px;text-indent:0.25px;">02/11/2026</span></td><td><span class="t" style="width:34.26px;letter-spacing:-0.139px;text-indent:0.12px;">Good</span></td><td><span class="acts"><svg class="ic ed" width="16" height="16" viewBox="0 0 24 24" fill="none" stroke="currentColor" stroke-width="2" stroke-linecap="round" stroke-linejoin="round"><path d="M12 3H5a2 2 0 0 0-2 2v14a2 2 0 0 0 2 2h14a2 2 0 0 0 2-2v-7"/><path d="M18.375 2.625a1 1 0 0 1 3 3l-9.013 9.014a2 2 0 0 1-.853.505l-2.873.84a.5.5 0 0 1-.62-.62l.84-2.873a2 2 0 0 1 .506-.852z"/></svg><svg class="ic tr" width="16" height="16" viewBox="0 0 24 24" fill="none" stroke="currentColor" stroke-width="2" stroke-linecap="round" stroke-linejoin="round"><path d="M3 6h18"/><path d="M19 6v14c0 1-1 2-2 2H7c-1 0-2-1-2-2V6"/><path d="M8 6V4c0-1 1-2 2-2h4c1 0 2 1 2 2v2"/><line x1="10" x2="10" y1="11" y2="17"/><line x1="14" x2="14" y1="11" y2="17"/></svg></span></td></tr><tr><td><span class="t" style="width:129.72px;letter-spacing:-0.025px;text-indent:0.06px;">First Aid Kit (FA-001)</span></td><td><span class="t" style="width:107.21px;letter-spacing:0.095px;text-indent:0.12px;">Anthony Thomas</span></td><td><span class="t" style="width:74.35px;letter-spacing:0.427px;text-indent:0.25px;">02/05/2026</span></td><td><span class="t" style="width:74.35px;letter-spacing:0.427px;text-indent:0.25px;">02/15/2026</span></td><td><span class="t" style="width:58.34px;letter-spacing:0.168px;text-indent:0.06px;">Excellent</span></td><td><span class="acts"><svg class="ic ed" width="16" height="16" viewBox="0 0 24 24" fill="none" stroke="currentColor" stroke-width="2" stroke-linecap="round" stroke-linejoin="round"><path d="M12 3H5a2 2 0 0 0-2 2v14a2 2 0 0 0 2 2h14a2 2 0 0 0 2-2v-7"/><path d="M18.375 2.625a1 1 0 0 1 3 3l-9.013 9.014a2 2 0 0 1-.853.505l-2.873.84a.5.5 0 0 1-.62-.62l.84-2.873a2 2 0 0 1 .506-.852z"/></svg><svg class="ic tr" width="16" height="16" viewBox="0 0 24 24" fill="none" stroke="currentColor" stroke-width="2" stroke-linecap="round" stroke-linejoin="round"><path d="M3 6h18"/><path d="M19 6v14c0 1-1 2-2 2H7c-1 0-2-1-2-2V6"/><path d="M8 6V4c0-1 1-2 2-2h4c1 0 2 1 2 2v2"/><line x1="10" x2="10" y1="11" y2="17"/><line x1="14" x2="14" y1="11" y2="17"/></svg></span></td></tr></tbody>
    </table>
    <div class="ft"><span class="info"><span class="t" style="width:184.24px;letter-spacing:0.137px;text-indent:-0.19px;">Showing 1 to 10 of 10 results</span></span>
      <div class="pg"><span class="pb prev"><svg class="ic " width="16" height="16" viewBox="0 0 24 24" fill="none" stroke="currentColor" stroke-width="2" stroke-linecap="round" stroke-linejoin="round"><path d="m15 18-6-6 6-6"/></svg><span class="t w5" style="width:55.96px;letter-spacing:0.193px;text-indent:0.06px;">Previous</span></span><span class="pn"><span class="t w5" style="width:7.99px;text-indent:0.19px;">1</span></span><span class="pb next"><span class="t w5" style="width:31.47px;letter-spacing:0.813px;text-indent:0.06px;">Next</span><svg class="ic " width="16" height="16" viewBox="0 0 24 24" fill="none" stroke="currentColor" stroke-width="2" stroke-linecap="round" stroke-linejoin="round"><path d="m9 18 6-6-6-6"/></svg></span></div>
    </div>
  </section>
</main>
</body></html>
